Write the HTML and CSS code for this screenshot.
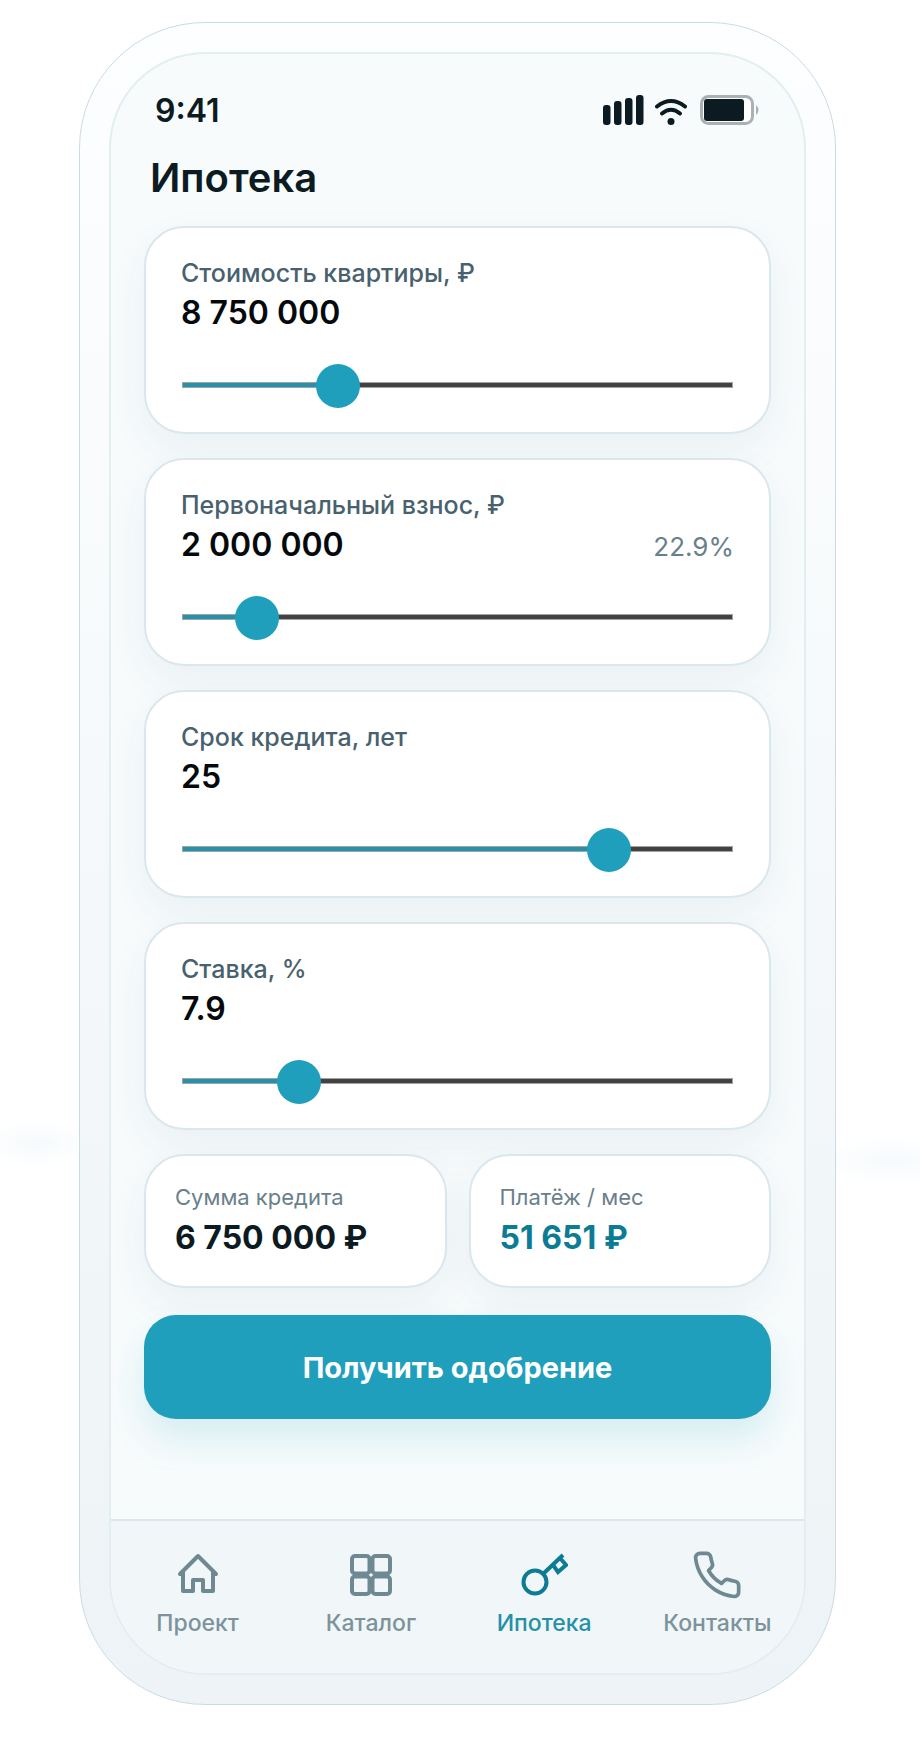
FILE: index.html
```
<!DOCTYPE html>
<html lang="ru">
<head>
    <meta charset="UTF-8">
    <meta name="viewport" content="width=device-width, initial-scale=1.0">
    <title>Ипотека</title>
    <link rel="stylesheet" href="styles.css">
</head>
<body>
    <div class="phone">
        <div class="screen">
            <div class="status-bar">
                <span class="time">9:41</span>
                <div class="status-icons">
                    <svg width="42" height="30" viewBox="0 0 42 30">
                        <rect x="0" y="10" width="7.5" height="20" rx="3"/>
                        <rect x="11" y="6" width="7.5" height="24" rx="3"/>
                        <rect x="22" y="3" width="7.5" height="27" rx="3"/>
                        <rect x="33" y="0" width="7.5" height="30" rx="3"/>
                    </svg>
                    <svg class="wifi" width="34" height="30" viewBox="0 0 34 30">
                        <path d="M3 11.5Q17 .5 31 11.5"/>
                        <path d="M8 18.5Q17 11 26 18.5"/>
                        <circle cx="17" cy="26.5" r="3.5"/>
                    </svg>
                    <svg width="60" height="30" viewBox="0 0 60 30">
                        <rect class="battery-case" x="1.5" y="1.5" width="51" height="27" rx="7"/>
                        <rect x="4" y="4" width="40" height="22" rx="3"/>
                        <path class="battery-cap" d="M56 10Q61 15 56 20Z"/>
                    </svg>
                </div>
            </div>

            <main>
                <h1>Ипотека</h1>

                <section class="card">
                    <label for="price">Стоимость квартиры, ₽</label>
                    <div class="card-row">
                        <output class="value" for="price">8 750 000</output>
                    </div>
                    <input type="range" id="price" min="3500000" max="23500000" step="50000" value="8750000" style="--fill: 26%">
                </section>

                <section class="card">
                    <label for="deposit">Первоначальный взнос, ₽</label>
                    <div class="card-row">
                        <output class="value" for="deposit">2 000 000</output>
                        <span class="percent">22.9%</span>
                    </div>
                    <input type="range" id="deposit" min="500000" max="15000000" step="50000" value="2000000" style="--fill: 10%">
                </section>

                <section class="card">
                    <label for="term">Срок кредита, лет</label>
                    <div class="card-row">
                        <output class="value" for="term">25</output>
                    </div>
                    <input type="range" id="term" min="5" max="30" step="1" value="25" style="--fill: 80%">
                </section>

                <section class="card">
                    <label for="rate">Ставка, %</label>
                    <div class="card-row">
                        <output class="value" for="rate">7.9</output>
                    </div>
                    <input type="range" id="rate" min="4" max="25" step="0.1" value="7.9" style="--fill: 19%">
                </section>

                <div class="totals">
                    <div class="total">
                        <p class="total-label">Сумма кредита</p>
                        <p class="total-value">6 750 000 ₽</p>
                    </div>
                    <div class="total">
                        <p class="total-label">Платёж / мес</p>
                        <p class="total-value accent">51 651 ₽</p>
                    </div>
                </div>

                <button type="button" class="submit">Получить одобрение</button>
            </main>

            <nav class="tabs">
                <a href="#">
                    <svg viewBox="0 0 48 48">
                        <path d="M6 23L24 5l18 18M9 21v19h10V29h10v11h10V21"/>
                    </svg>
                    Проект
                </a>
                <a href="#">
                    <svg viewBox="0 0 48 48">
                        <rect x="5" y="5" width="17.5" height="17.5" rx="3"/>
                        <rect x="25.5" y="5" width="17.5" height="17.5" rx="3"/>
                        <rect x="5" y="25.5" width="17.5" height="17.5" rx="3"/>
                        <rect x="25.5" y="25.5" width="17.5" height="17.5" rx="3"/>
                    </svg>
                    Каталог
                </a>
                <a href="#" class="active">
                    <svg viewBox="0 0 48 48" class="key-icon">
                        <circle cx="15" cy="31" r="11.5"/>
                        <path d="M23 23L43 4M33 14l5 7 8-7-6-7"/>
                    </svg>
                    Ипотека
                </a>
                <a href="#">
                    <svg viewBox="0 0 24 24" class="phone-icon">
                        <path d="M22 16.92v3a2 2 0 0 1-2.18 2 19.79 19.79 0 0 1-8.63-3.07 19.5 19.5 0 0 1-6-6A19.79 19.79 0 0 1 2.12 4.18 2 2 0 0 1 4.11 2h3a2 2 0 0 1 2 1.72c.13.96.36 1.9.7 2.81a2 2 0 0 1-.45 2.11L8.09 9.91a16 16 0 0 0 6 6l1.27-1.27a2 2 0 0 1 2.11-.45c.91.34 1.85.57 2.81.7A2 2 0 0 1 22 16.92z"/>
                    </svg>
                    Контакты
                </a>
            </nav>
        </div>
    </div>

    <script>
        // Repaint the filled part of a slider and its value when it moves
        document.querySelectorAll('input[type="range"]').forEach(input => {
            const output = document.querySelector(`output[for="${input.id}"]`);
            input.addEventListener('input', () => {
                const fill = (input.value - input.min) / (input.max - input.min) * 100;
                input.style.setProperty('--fill', fill + '%');
                output.textContent = input.value.replace(/\B(?=(\d{3})+$)/g, ' ');
            });
        });
    </script>
</body>
</html>
```
FILE: styles.css
```
:root {
    --primary-color: #209fbd;
    --primary-dark: #0c7c95;
    --text-color: #0c1b22;
    --text-label: #48616e;
    --text-light: #69808b;
    --border-color: #dae7ec;
    --track-color: #424242;
    --card-radius: 40px;
}

* {
    margin: 0;
    padding: 0;
    box-sizing: border-box;
}

body {
    font-family: Inter, "Noto Sans", sans-serif;
    color: var(--text-color);
    background:
        radial-gradient(60px 24px at 4% 65%, #f6fafc, transparent),
        radial-gradient(80px 24px at 97% 66%, #f6fafc, transparent),
        #ffffff;
    padding: 22px 84px 54px 79px;
}

.phone {
    padding: 29px;
    border: 1px solid #c9dce5;
    border-radius: 126px;
    background: linear-gradient(#fdfeff, #edf3f6);
}

.screen {
    display: flex;
    flex-direction: column;
    border: 2px solid #e2eef0;
    border-radius: 96px;
    background-color: #f7fbfc;
    overflow: hidden;
}

.status-bar {
    display: flex;
    justify-content: space-between;
    align-items: center;
    height: 68px;
    margin-top: 22px;
    padding: 0 44px;
}

.time {
    font-size: 32px;
    font-weight: 600;
}

.status-icons {
    display: flex;
    align-items: center;
    gap: 9px;
}

.status-icons svg {
    fill: var(--text-color);
}

.status-icons .wifi {
    margin-right: 3px;
}

.wifi path {
    fill: none;
    stroke: var(--text-color);
    stroke-width: 4;
    stroke-linecap: round;
}

.status-icons .battery-case {
    fill: #ffffff;
    stroke: #a9b1b5;
    stroke-width: 3;
}

.status-icons .battery-cap {
    fill: #a9b1b5;
}

main {
    display: flex;
    flex-direction: column;
    gap: 24px;
    padding: 10px 33px 100px;
}

h1 {
    padding-left: 6px;
    font-size: 40px;
    font-weight: 600;
    line-height: 48px;
}

.card {
    display: flex;
    flex-direction: column;
    height: 208px;
    padding: 28px 35px;
    border: 2px solid var(--border-color);
    border-radius: var(--card-radius);
    background-color: #ffffff;
    box-shadow: 0 16px 40px rgba(30, 70, 100, 0.06);
}

.card label {
    font-size: 25px;
    font-weight: 500;
    line-height: 35px;
    color: var(--text-label);
}

.card-row {
    display: flex;
    justify-content: space-between;
    align-items: baseline;
}

.value {
    font-size: 32px;
    font-weight: 600;
    line-height: 44px;
    color: #05090c;
}

.percent {
    font-size: 26px;
    color: var(--text-light);
}

input[type="range"] {
    appearance: none;
    height: 44px;
    margin: 30px 1px 0;
    background: none;
    cursor: pointer;
}

input[type="range"]::-webkit-slider-runnable-track {
    height: 6px;
    border: 1px solid #a3a3a3;
    background: linear-gradient(to right, #2592ac var(--fill), var(--track-color) var(--fill));
    background-clip: padding-box;
}

input[type="range"]::-webkit-slider-thumb {
    appearance: none;
    width: 44px;
    height: 44px;
    margin-top: -19px;
    border-radius: 50%;
    background-color: var(--primary-color);
}

.totals {
    display: grid;
    grid-template-columns: 1fr 1fr;
    gap: 22px;
}

.total {
    padding: 22px 29px 26px;
    border: 2px solid var(--border-color);
    border-radius: var(--card-radius);
    background-color: #ffffff;
    box-shadow: 0 16px 40px rgba(30, 70, 100, 0.06);
}

.total-label {
    font-size: 22px;
    line-height: 38px;
    color: var(--text-light);
}

.total-value {
    font-size: 32px;
    font-weight: 700;
    line-height: 44px;
}

.accent {
    color: var(--primary-dark);
}

.submit {
    height: 104px;
    margin-top: 3px;
    border: none;
    border-radius: 32px;
    background-color: var(--primary-color);
    box-shadow: 0 20px 36px rgba(32, 159, 189, 0.15);
    color: #ffffff;
    font-family: inherit;
    font-size: 29px;
    font-weight: 700;
    cursor: pointer;
}

.tabs {
    display: grid;
    grid-template-columns: repeat(4, 1fr);
    height: 154px;
    padding-top: 30px;
    border-top: 2px solid var(--border-color);
    background-color: #f1f6f9;
}

.tabs a {
    display: flex;
    flex-direction: column;
    align-items: center;
    gap: 8px;
    font-size: 23px;
    font-weight: 500;
    line-height: 32px;
    color: #7d939c;
    text-decoration: none;
}

.tabs svg {
    width: 48px;
    height: 48px;
    fill: none;
    stroke: #6f8993;
    stroke-width: 4;
    stroke-linejoin: round;
    stroke-linecap: round;
}

.tabs .key-icon {
    stroke-linejoin: miter;
    stroke-linecap: butt;
}

.tabs .phone-icon {
    width: 52px;
    height: 52px;
    margin: -2px;
    stroke-width: 1.7;
}

.tabs .active {
    color: #2590a8;
}

.tabs .active svg {
    stroke: var(--primary-dark);
}
```
